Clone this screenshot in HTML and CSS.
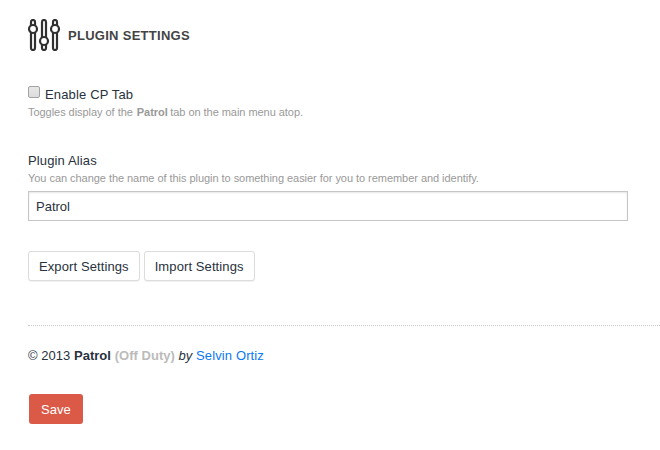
FILE: index.html
```
<!DOCTYPE html>
<html lang="en">
<head>
<meta charset="utf-8">
<title>Plugin Settings</title>
<link rel="stylesheet" href="styles.css">
</head>
<body>
<main class="settings">
  <header class="heading">
    <svg class="heading-icon" viewBox="0 0 32 32" width="32" height="32" fill="none" stroke="#303030" stroke-width="2.200">
      <path d="M3 6.5V3a2 2 0 0 1 4 0V6.5M3 13.5V29a2 2 0 0 0 4 0V13.5"/>
      <circle cx="5" cy="10" r="4"/>
      <path d="M14 18.5V3a2 2 0 0 1 4 0V18.5M14 25.500V29a2 2 0 0 0 4 0V25.500"/>
      <circle cx="16" cy="22" r="4"/>
      <path d="M25 6.500V3a2 2 0 0 1 4 0V6.500M25 13.500V29a2 2 0 0 0 4 0V13.500"/>
      <circle cx="27" cy="10" r="4"/>
    </svg>
    <h1 class="title">PLUGIN SETTINGS</h1>
  </header>
  <form class="form">
    <div class="field tab-field">
      <label class="check-label"><input class="check" type="checkbox">Enable CP Tab</label>
      <p class="hint">Toggles display of the <b class="name">Patrol</b> tab on the main menu atop.</p>
    </div>
    <div class="field alias-field">
      <label class="label" for="alias">Plugin Alias</label>
      <p class="hint">You can change the name of this plugin to something easier for you to remember and identify.</p>
      <input class="text" id="alias" type="text" value="Patrol">
    </div>
    <div class="actions">
      <button class="btn" type="button">Export Settings</button>
      <button class="btn" type="button">Import Settings</button>
    </div>
    <p class="credit">© 2013 <b>Patrol</b> <b class="status">(Off Duty)</b> <i>by</i> <a class="link" href="#">Selvin Ortiz</a></p>
    <button class="save" type="button">Save</button>
  </form>
</main>
</body>
</html>
```
FILE: styles.css
```
* { box-sizing: border-box; }
body {
  margin: 0;
  background: #fff;
  color: #29323d;
  font: 13px/18px "Liberation Sans", Arial, sans-serif;
  overflow: hidden;
}
h1, p { margin: 0; }
.settings { padding: 19px 0 0 28px; }
.heading { display: flex; align-items: center; gap: 8px; height: 32px; }
.heading-icon { display: block; }
.title { padding-top: 2px; font-size: 13px; line-height: 18px; letter-spacing: .28px; color: #444; }
.form { display: flex; flex-direction: column; align-items: flex-start; }
.field { width: 600px; }
.tab-field { margin-top: 34px; }
.check-label { display: flex; height: 18px; line-height: 19px; letter-spacing: .15px; }
.check {
  appearance: none;
  width: 12px;
  height: 12px;
  margin: 1px 5px 0 0;
  border: 1px solid #a3a3a3;
  border-radius: 2px;
  background: linear-gradient(#e8e8e8, #dcdcdc);
}
.hint { font-size: 11px; line-height: 18px; letter-spacing: -.045px; color: #999; }
.name { margin: 0 -.5px 0 1px; }
.alias-field { margin-top: 31px; }
.label { display: block; height: 17px; letter-spacing: .13px; }
.text {
  display: block;
  width: 600px;
  height: 30px;
  margin-top: 4px;
  padding: 0 7px;
  border: 1px solid #c6c6c6;
  border-radius: 0;
  background: #fff;
  box-shadow: inset 0 1px 2px rgba(0, 0, 0, .1);
  color: inherit;
  font: inherit;
}
.actions { display: flex; gap: 4px; margin-top: 30px; }
.btn {
  height: 30px;
  padding: 2px 10px 0;
  border: 1px solid #dcdcdc;
  border-radius: 3px;
  background: #fff;
  box-shadow: 0 1px 1px rgba(0, 0, 0, .06);
  color: inherit;
  font: inherit;
  letter-spacing: .1px;
}
.credit {
  width: 100%;
  margin-top: 44px;
  padding-top: 21px;
  border-top: 1px dotted #ccc;
  letter-spacing: .03px;
}
.status { color: #bbb; }
.link { color: #0d78f2; text-decoration: none; letter-spacing: .13px; }
.save {
  height: 30px;
  margin: 29px 0 0 1px;
  padding: 2px 12px 0;
  border: 0;
  border-radius: 3px;
  background: #da5a47;
  color: #fff;
  font: inherit;
}
```
